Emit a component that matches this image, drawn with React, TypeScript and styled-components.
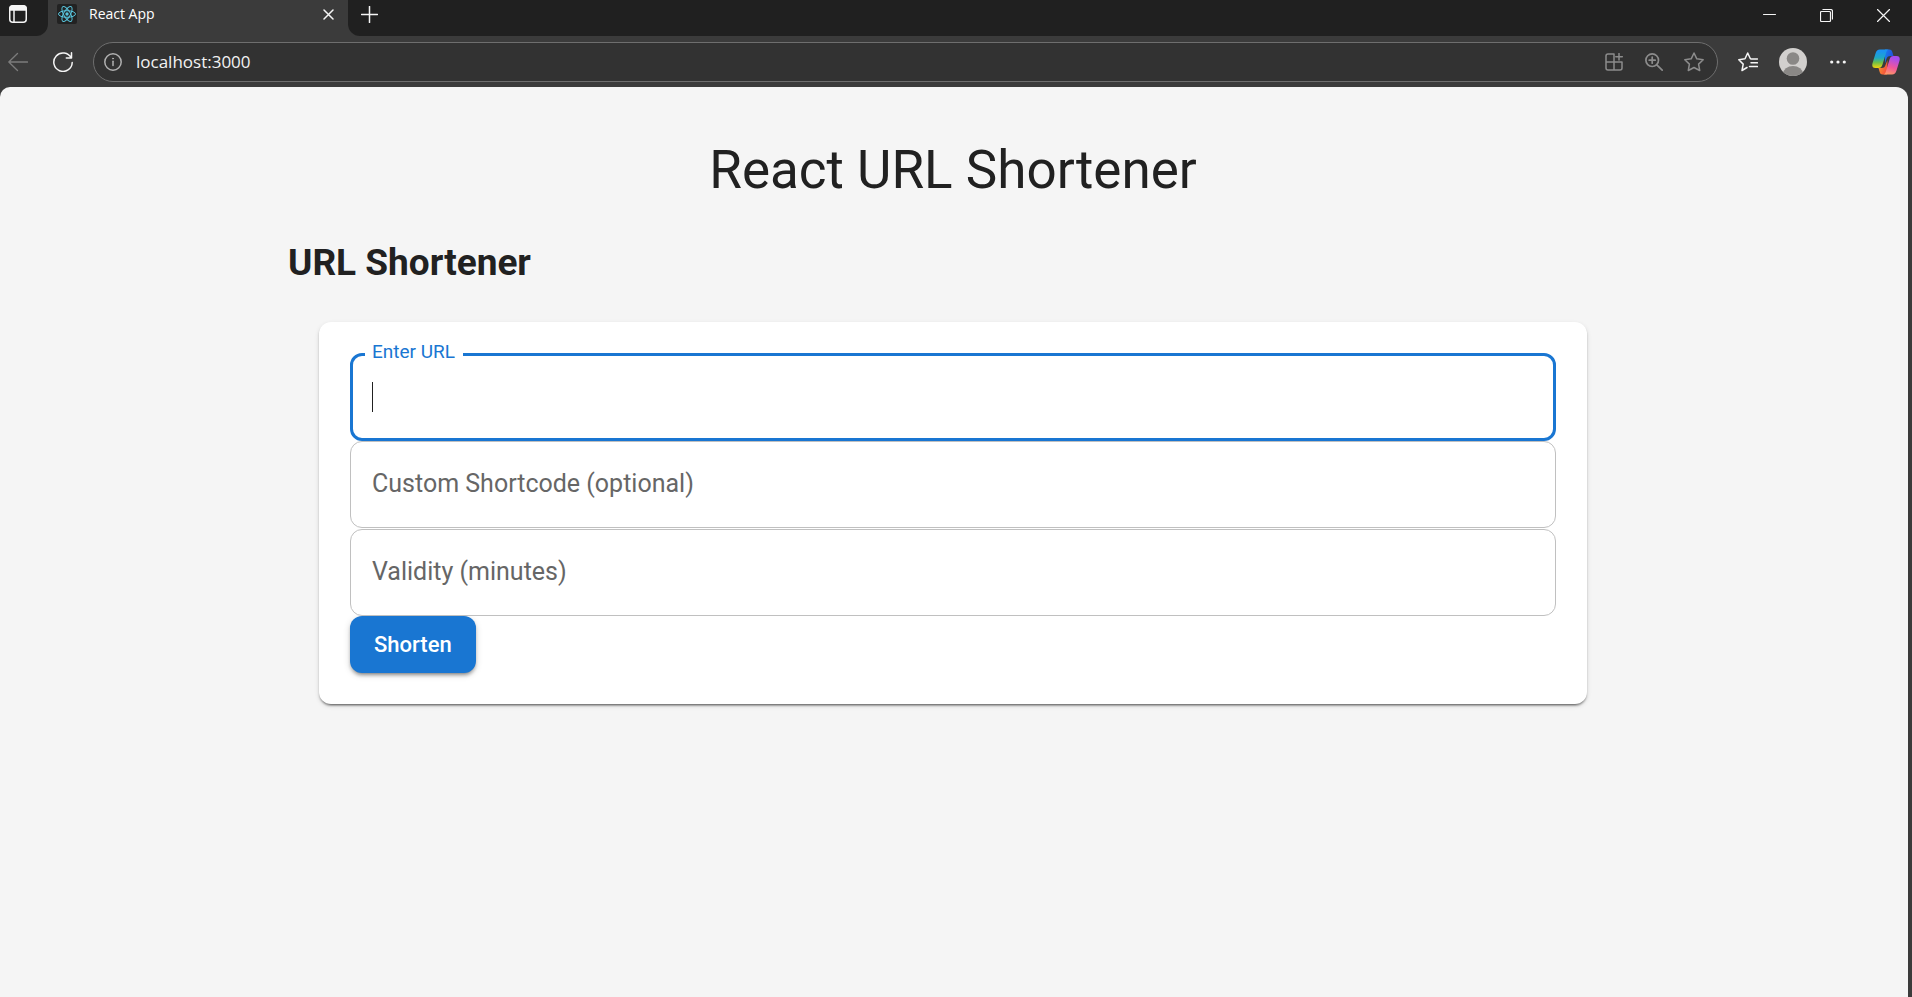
import React from "react";
import styled, { createGlobalStyle, css } from "styled-components";

const GlobalStyle = createGlobalStyle`
  *, *::before, *::after { box-sizing: border-box; }
  body { margin: 0; background: #3b3b3b; font-family: Roboto, "Liberation Sans", sans-serif; }
  button, input { font: inherit; }
`;

const chromeFont = css`
  font-family: "Open Sans", "Noto Sans", sans-serif;
`;

const Browser = styled.div`
  display: flex;
  flex-direction: column;
  min-height: 100vh;
`;

const TabStrip = styled.header`
  display: flex;
  height: 36px;
  background: #3b3b3b;
  ${chromeFont}
`;

const IconButton = styled.button<{ $width: number; $color?: string }>`
  display: flex;
  align-items: center;
  justify-content: center;
  flex: none;
  width: ${(p) => p.$width}px;
  height: 28px;
  padding: 0;
  border: 0;
  background: none;
  color: ${(p) => p.$color ?? "#f5f5f5"};
`;

const StripStart = styled.div`
  display: flex;
  flex: none;
  padding-right: 12px;
  background: #202020;
  border-radius: 0 0 12px 0;
`;

const StripEnd = styled.div`
  display: flex;
  flex: 1;
  background: #202020;
  border-radius: 0 0 0 12px;
`;

const Tab = styled.div`
  display: flex;
  align-items: center;
  width: 300px;
  height: 28px;
  padding: 0 2px 0 9px;
  gap: 12px;
  color: #ffffff;
  font-size: 14px;
  line-height: 20px;
`;

const TabTitle = styled.span`
  flex: 1;
`;

const WindowControls = styled.div`
  display: flex;
  margin-left: auto;
  padding-top: 1px;
`;

const Toolbar = styled.nav`
  display: flex;
  align-items: center;
  height: 51px;
  background: #3b3b3b;
  ${chromeFont}
`;

const NavButtons = styled.div`
  display: flex;
  gap: 9px;
  margin-right: 12px;
`;

const AddressBar = styled.div`
  display: flex;
  flex: 1;
  align-items: center;
  height: 40px;
  margin-right: 7px;
  padding: 0 3px 0 10px;
  border: 1px solid #6e6e6e;
  border-radius: 20px;
  background: #323232;
`;

const AddressInput = styled.input`
  flex: 1;
  min-width: 0;
  margin-left: 14px;
  padding: 0;
  border: 0;
  outline: 0;
  background: none;
  color: #f2f2f2;
  font-size: 17px;
  line-height: 24px;
`;

const Page = styled.main`
  flex: 1;
  margin-right: 4px;
  padding: 50px 2px 50px 0;
  border-radius: 10px 12px 0 0;
  background: #f5f5f5;
  color: #212121;
`;

const Container = styled.div`
  max-width: 1404px;
  margin: 0 auto;
  padding: 0 37px;
`;

const AppTitle = styled.h1`
  margin: 0;
  font-size: 53px;
  font-weight: 400;
  line-height: 66px;
  text-align: center;
`;

const SectionTitle = styled.h2`
  margin: 32px 0 30px;
  font-size: 37px;
  font-weight: 700;
  line-height: 56px;
`;

const Card = styled.form`
  margin: 31px;
  padding: 31px;
  border-radius: 12px;
  background: #ffffff;
  box-shadow: 0 3px 2px -2px rgba(0, 0, 0, 0.4), 0 2px 2px rgba(0, 0, 0, 0.2), 0 2px 5px rgba(0, 0, 0, 0.12);
`;

const Field = styled.div<{ $active?: boolean }>`
  position: relative;
  height: ${(p) => (p.$active ? 88 : 87)}px;

  &:last-of-type {
    margin-top: 1px;
  }
`;

const FieldInput = styled.input<{ $active?: boolean }>`
  display: block;
  width: 100%;
  height: 100%;
  padding: 0 22px;
  border: ${(p) => (p.$active ? "3px solid #1976d2" : "1px solid #c0c0c0")};
  border-radius: 12px;
  outline: 0;
  background: #ffffff;
  color: #212121;
  font-size: 25px;
  caret-color: transparent;
`;

const FieldLabel = styled.label<{ $active?: boolean }>`
  position: absolute;
  white-space: nowrap;
  ${(p) =>
    p.$active
      ? css`
          top: -13px;
          left: 15px;
          padding: 0 8px 0 7px;
          background: #ffffff;
          color: #1976d2;
          font-size: 19px;
          line-height: 24px;
        `
      : css`
          top: 25px;
          left: 22px;
          color: #666666;
          font-size: 25px;
          line-height: 36px;
        `}
`;

const Caret = styled.span`
  position: absolute;
  top: 29px;
  left: 22px;
  width: 1px;
  height: 30px;
  background: #212121;
`;

const SubmitButton = styled.button`
  display: block;
  height: 57px;
  padding: 0 24px;
  border: 0;
  border-radius: 12px;
  background: #1976d2;
  color: #ffffff;
  font-size: 22px;
  font-weight: 500;
  line-height: 38px;
  box-shadow: 0 4px 2px -3px rgba(0, 0, 0, 0.2), 0 3px 3px rgba(0, 0, 0, 0.2), 0 2px 7px rgba(0, 0, 0, 0.16);
`;

type IconProps = { size: number; children: React.ReactNode; stroke?: number };

const Icon = ({ size, children, stroke = 1.5 }: IconProps) => (
  <svg
    width={size}
    height={size}
    viewBox={`0 0 ${size} ${size}`}
    fill="none"
    stroke="currentColor"
    strokeWidth={stroke}
    strokeLinecap="round"
    strokeLinejoin="round"
    aria-hidden="true"
  >
    {children}
  </svg>
);

const ReactIcon = () => (
  <svg width="20" height="20" viewBox="0 0 20 20" fill="none" stroke="#58c4dc" strokeWidth="1" aria-hidden="true">
    <rect width="20" height="20" rx="2" fill="#222222" stroke="none" />
    <circle cx="10" cy="10" r="1.7" fill="#58c4dc" stroke="none" />
    <ellipse cx="10" cy="10" rx="8.5" ry="3.3" />
    <ellipse cx="10" cy="10" rx="8.5" ry="3.3" transform="rotate(60 10 10)" />
    <ellipse cx="10" cy="10" rx="8.5" ry="3.3" transform="rotate(120 10 10)" />
  </svg>
);

const AvatarIcon = () => (
  <svg width="28" height="28" viewBox="0 0 28 28" aria-hidden="true">
    <defs>
      <clipPath id="avatar-clip">
        <circle cx="14" cy="14" r="14" />
      </clipPath>
    </defs>
    <g clipPath="url(#avatar-clip)">
      <rect width="28" height="28" fill="#d2d0ce" />
      <circle cx="14" cy="10.5" r="6.3" fill="#8a8886" />
      <ellipse cx="14" cy="26" rx="10" ry="8" fill="#8a8886" />
    </g>
  </svg>
);

const CopilotIcon = () => (
  <svg width="28" height="26" viewBox="0 0 28 26" aria-hidden="true">
    <defs>
      <linearGradient id="cp-left" x1="0" y1="0" x2="0" y2="1">
        <stop offset="0.1" stopColor="#1b93f0" />
        <stop offset="0.45" stopColor="#1fa8c4" />
        <stop offset="0.7" stopColor="#6cbf4a" />
        <stop offset="1" stopColor="#f2d50c" />
      </linearGradient>
      <linearGradient id="cp-right" x1="0.3" y1="0" x2="0" y2="1">
        <stop offset="0" stopColor="#a64df0" />
        <stop offset="0.5" stopColor="#f0569a" />
        <stop offset="1" stopColor="#ffa65c" />
      </linearGradient>
      <linearGradient id="cp-top" x1="0" y1="0" x2="1" y2="0.4">
        <stop offset="0" stopColor="#1b7df0" />
        <stop offset="1" stopColor="#2150d8" />
      </linearGradient>
      <linearGradient id="cp-bottom" x1="0" y1="0" x2="1" y2="0.5">
        <stop offset="0" stopColor="#f5a02c" />
        <stop offset="1" stopColor="#f5503c" />
      </linearGradient>
    </defs>
    <path d="M13 0.5H17.2C19.2 0.5 20 1.8 20.5 3.5L21.500 7H18.5C16 7 15 8 14.2 10.5L13 14.5Z" fill="url(#cp-top)" />
    <path d="M15 25.5H10.5C8.700 25.5 8 24.2 7.5 22.5L6.500 19H9.500C12 19 13 18 13.7 15.5L15.5 11Z" fill="url(#cp-bottom)" />
    <path d="M8 0.5H17C15.3 0.5 14.6 2 14 4L10.5 15.5C9.8 18 8.7 19 6.5 19H3.5C0.5 19 -0.2 17 0.5 14.2L3.5 4.5C4.3 1.8 5.5 0.5 8 0.5Z" fill="url(#cp-left)" />
    <path d="M20 25.5H11C12.7 25.5 13.4 24 14 22L17.5 10.5C18.2 8 19.3 7 21.5 7H24.5C27.5 7 28.2 9 27.5 11.8L24.5 21.5C23.7 24.2 22.5 25.5 20 25.5Z" fill="url(#cp-right)" />
  </svg>
);

type TextFieldProps = { id: string; label: string; active?: boolean };

const TextField = ({ id, label, active }: TextFieldProps) => (
  <Field $active={active}>
    <FieldInput id={id} type="text" $active={active} />
    <FieldLabel htmlFor={id} $active={active}>
      {label}
    </FieldLabel>
    {active && <Caret />}
  </Field>
);

export default function App() {
  return (
    <Browser>
      <GlobalStyle />
      <TabStrip>
        <StripStart>
          <IconButton $width={36} aria-label="Tab actions">
            <Icon size={18}>
              <rect x="0.75" y="0.75" width="16.5" height="16.5" rx="3" />
              <path d="M1 5V3.5A2.5 2.5 0 0 1 3.5 1h11A2.5 2.5 0 0 1 17 3.5V5Z" fill="currentColor" />
              <path d="M5 5v12" />
            </Icon>
          </IconButton>
        </StripStart>
        <Tab>
          <ReactIcon />
          <TabTitle>React App</TabTitle>
          <IconButton $width={35} aria-label="Close tab">
            <Icon size={11}>
              <path d="M1 1l9 9M10 1l-9 9" />
            </Icon>
          </IconButton>
        </Tab>
        <StripEnd>
          <IconButton $width={43} aria-label="New tab">
            <Icon size={17}>
              <path d="M8.5 0.5v16M0.5 8.5h16" />
            </Icon>
          </IconButton>
          <WindowControls>
            <IconButton $width={57} aria-label="Minimize">
              <Icon size={13} stroke={1}>
                <path d="M0.5 5.5h12" />
              </Icon>
            </IconButton>
            <IconButton $width={57} aria-label="Restore">
              <Icon size={13} stroke={1.2}>
                <rect x="0.5" y="2.5" width="10" height="10" rx="1" />
                <path d="M3 0.5h7.5a2 2 0 0 1 2 2V10" />
              </Icon>
            </IconButton>
            <IconButton $width={57} aria-label="Close">
              <Icon size={13} stroke={1.2}>
                <path d="M0.5 0.5l12 12M12.5 0.5l-12 12" />
              </Icon>
            </IconButton>
          </WindowControls>
        </StripEnd>
      </TabStrip>
      <Toolbar>
        <NavButtons>
          <IconButton $width={36} $color="#7c7c7c" aria-label="Back">
            <Icon size={20} stroke={1.3}>
              <path d="M19.5 10H0.8M9.5 1.5L0.8 10l8.7 8.5" />
            </Icon>
          </IconButton>
          <IconButton $width={36} aria-label="Refresh">
            <Icon size={20}>
              <path d="M18.2 6A9.2 9.2 0 1 0 19.2 10.5M18.5 0.8V6h-5.2" />
            </Icon>
          </IconButton>
        </NavButtons>
        <AddressBar>
          <IconButton $width={18} $color="#b0b0b0" aria-label="Site information">
            <Icon size={18}>
              <circle cx="9" cy="9" r="8.2" />
              <path d="M9 8.2v4.3" />
              <circle cx="9" cy="5.6" r="0.5" fill="currentColor" strokeWidth={1} />
            </Icon>
          </IconButton>
          <AddressInput aria-label="Address" defaultValue="localhost:3000" />
          <IconButton $width={40} $color="#8c8c8c" aria-label="App available">
            <Icon size={18}>
              <path d="M9 1H3a2 2 0 0 0-2 2v12a2 2 0 0 0 2 2h12a2 2 0 0 0 2-2v-6H1M9 1v16M14 0.5v6.5M10.8 3.7h6.5" />
            </Icon>
          </IconButton>
          <IconButton $width={40} $color="#8c8c8c" aria-label="Zoom">
            <Icon size={18} stroke={1.7}>
              <circle cx="7.2" cy="7.2" r="6.3" />
              <path d="M11.8 11.8l5.4 5.4M7.2 4.2v6M4.2 7.2h6" />
            </Icon>
          </IconButton>
          <IconButton $width={40} $color="#8c8c8c" aria-label="Add to favorites">
            <Icon size={20}>
              <path d="M10 1l2.800 5.800 6.400.9-4.600 4.400 1.100 6.400L10 15.500l-5.700 3 1.100-6.400L0.800 7.700l6.400-.9Z" />
            </Icon>
          </IconButton>
        </AddressBar>
        <IconButton $width={45} aria-label="Favorites">
          <Icon size={20}>
            <path d="M9 15.5l-5 3 1.200-6.400L0.800 7.700l6.200-.9L9.700 1l2.700 5.800M13 7h6.500M13 10.800h6.500M11.500 14.600h8" />
          </Icon>
        </IconButton>
        <IconButton $width={45} aria-label="Profile">
          <AvatarIcon />
        </IconButton>
        <IconButton $width={45} aria-label="Settings and more">
          <svg width="16" height="4" viewBox="0 0 16 4" fill="currentColor" aria-hidden="true">
            <circle cx="1.7" cy="2" r="1.6" />
            <circle cx="8" cy="2" r="1.6" />
            <circle cx="14.3" cy="2" r="1.6" />
          </svg>
        </IconButton>
        <IconButton $width={52} aria-label="Copilot">
          <CopilotIcon />
        </IconButton>
      </Toolbar>
      <Page>
        <Container>
          <AppTitle>React URL Shortener</AppTitle>
          <SectionTitle>URL Shortener</SectionTitle>
          <Card>
            <TextField id="url" label="Enter URL" active />
            <TextField id="shortcode" label="Custom Shortcode (optional)" />
            <TextField id="validity" label="Validity (minutes)" />
            <SubmitButton type="button">Shorten</SubmitButton>
          </Card>
        </Container>
      </Page>
    </Browser>
  );
}
